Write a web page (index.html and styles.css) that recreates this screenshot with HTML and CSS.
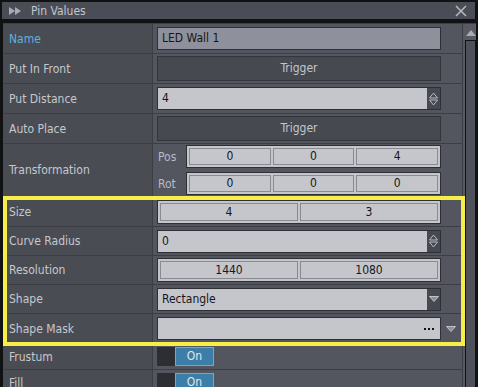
FILE: index.html
```html
<!DOCTYPE html>
<html>
<head>
    <title>Pin Values</title>
    <link rel="stylesheet" href="styles.css">
</head>
<body>
    <div class="panel">
        <div class="titlebar">
            <svg class="ff" width="13" height="8" viewBox="0 0 13 8"><path d="M0 0 L6 4 L0 8 Z M6 0 L12 4 L6 8 Z" fill="#a9abb3"/></svg>
            <span class="title">Pin Values</span>
            <svg class="close" width="12" height="12" viewBox="0 0 12 12"><path d="M1 1 L11 11 M11 1 L1 11" stroke="#b8bac0" stroke-width="1.5"/></svg>
        </div>

        <div class="content">
            <div class="props">
                <div class="row">
                    <div class="label name">Name</div>
                    <div class="value"><div class="field dim">LED Wall 1</div></div>
                </div>
                <div class="row">
                    <div class="label">Put In Front</div>
                    <div class="value"><div class="button">Trigger</div></div>
                </div>
                <div class="row">
                    <div class="label">Put Distance</div>
                    <div class="value">
                        <div class="field with-side">4
                            <span class="side spin"><svg width="9" height="14" viewBox="0 0 9 14"><path d="M0.5 6 L4.5 1 L8.5 6 Z M0.5 8 L4.5 13 L8.5 8 Z" fill="none" stroke="#b9bbc2"/></svg></span>
                        </div>
                    </div>
                </div>
                <div class="row">
                    <div class="label">Auto Place</div>
                    <div class="value"><div class="button">Trigger</div></div>
                </div>
                <div class="row tall">
                    <div class="label">Transformation</div>
                    <div class="value vec-rows">
                        <div class="vec-line">
                            <span class="axis">Pos</span>
                            <div class="cells">
                                <span class="cell">0</span><span class="cell">0</span><span class="cell">4</span>
                            </div>
                        </div>
                        <div class="vec-line">
                            <span class="axis">Rot</span>
                            <div class="cells">
                                <span class="cell">0</span><span class="cell">0</span><span class="cell">0</span>
                            </div>
                        </div>
                    </div>
                </div>
                <div class="row">
                    <div class="label">Size</div>
                    <div class="value">
                        <div class="cells two"><span class="cell">4</span><span class="cell">3</span></div>
                    </div>
                </div>
                <div class="row snug">
                    <div class="label">Curve Radius</div>
                    <div class="value">
                        <div class="field with-side">0
                            <span class="side spin"><svg width="9" height="14" viewBox="0 0 9 14"><path d="M0.5 6 L4.5 1 L8.5 6 Z M0.5 8 L4.5 13 L8.5 8 Z" fill="none" stroke="#b9bbc2"/></svg></span>
                        </div>
                    </div>
                </div>
                <div class="row snug">
                    <div class="label">Resolution</div>
                    <div class="value">
                        <div class="cells two"><span class="cell">1440</span><span class="cell">1080</span></div>
                    </div>
                </div>
                <div class="row snug">
                    <div class="label">Shape</div>
                    <div class="value">
                        <div class="field with-side">Rectangle
                            <span class="side spin"><svg width="10" height="6" viewBox="0 0 10 6"><path d="M0.5 0.5 L9.5 0.5 L5 5.5 Z" fill="#8d9098" stroke="#c0c2c8"/></svg></span>
                        </div>
                    </div>
                </div>
                <div class="row">
                    <div class="label">Shape Mask</div>
                    <div class="value mask">
                        <div class="field">
                            <svg class="dots" width="10" height="2" viewBox="0 0 10 2"><rect x="0" y="0" width="2" height="2" fill="#111"/><rect x="4" y="0" width="2" height="2" fill="#111"/><rect x="8" y="0" width="2" height="2" fill="#111"/></svg>
                        </div>
                        <svg class="outer-arrow" width="10" height="6" viewBox="0 0 10 6"><path d="M0.5 0.5 L9.5 0.5 L5 5.5 Z" fill="#8d9098" stroke="#c0c2c8"/></svg>
                    </div>
                </div>
                <div class="row short">
                    <div class="label">Frustum</div>
                    <div class="value"><div class="toggle"><span class="knob"></span><span class="on">On</span></div></div>
                </div>
                <div class="row short">
                    <div class="label">Fill</div>
                    <div class="value"><div class="toggle"><span class="knob"></span><span class="on">On</span></div></div>
                </div>
            </div>

            <div class="scrollbar">
                <svg class="up" width="10" height="6" viewBox="0 0 10 6"><path d="M0 6 L5 0 L10 6 Z" fill="#a9abb3"/></svg>
                <div class="thumb"></div>
            </div>
        </div>

        <div class="highlight"></div>
    </div>
</body>
</html>
```

FILE: styles.css
```css
html, body {
    margin: 0;
    padding: 0;
    background: #1c1d20;
}
body {
    font-family: "DejaVu Sans Condensed", "DejaVu Sans", sans-serif;
    font-size: 11px;
    color: #c6c8cc;
}
.panel {
    position: relative;
    width: 478px;
    height: 387px;
    overflow: hidden;
    background: #111214;
}
.titlebar {
    display: flex;
    align-items: center;
    height: 17px;
    margin: 2px 3px 0 2px;
    padding-left: 7px;
    background: #4a4c56;
    border-bottom: 3px solid #111214;
}
.titlebar .ff {
    margin-right: 9px;
}
.titlebar .title {
    flex: 1;
    font-size: 12px;
    color: #c4c6ce;
}
.titlebar .close {
    margin-right: 8px;
}
.content {
    display: flex;
    margin: 1px 2px 0 3px;
    border-top: 1px solid #3d3f46;
}
.props {
    width: 459px;
}
.row {
    display: flex;
    height: 29px;
    border-bottom: 1px solid #3c3e44;
}
.row.snug {
    height: 28px;
}
.row.tall {
    height: 52px;
}
.row.short {
    height: 25px;
}
.label {
    width: 143px;
    padding-left: 6px;
    display: flex;
    align-items: center;
    background: #4a4c54;
    border-right: 1px solid #3c3e44;
    font-size: 12px;
    color: #c6c8cc;
}
.label.name {
    color: #5fb1df;
}
.value {
    flex: 1;
    display: flex;
    align-items: center;
    padding: 0 21px 0 4px;
    background: #54565f;
}
.field {
    position: relative;
    flex: 1;
    height: 21px;
    line-height: 21px;
    padding-left: 4px;
    background: #c5c6cb;
    border: 1px solid #2e3035;
    color: #15161a;
    font-size: 12px;
}
.field.dim {
    background: #8e919c;
}
.field.with-side {
    padding-right: 14px;
}
.side {
    position: absolute;
    top: 0;
    right: 0;
    width: 13px;
    height: 21px;
    display: flex;
    align-items: center;
    justify-content: center;
    background: #464951;
}
.button {
    flex: 1;
    height: 23px;
    line-height: 23px;
    text-align: center;
    background: #464950;
    border: 1px solid #33353b;
    color: #c4c6ca;
    font-size: 12px;
}
.vec-rows {
    flex-direction: column;
    align-items: stretch;
    justify-content: center;
    gap: 4px;
}
.vec-line {
    display: flex;
    align-items: center;
}
.axis {
    width: 28px;
    padding-left: 1px;
    font-size: 12px;
    color: #b4bccb;
}
.cells {
    flex: 1;
    display: flex;
    gap: 2px;
    padding: 2px;
    background: #c5c6cb;
    border: 1px solid #2e3035;
}
.cell {
    flex: 1;
    height: 15px;
    line-height: 15px;
    text-align: center;
    border: 1px solid #8a8b90;
    color: #15161a;
    font-size: 12px;
}
.cells.two .cell {
    height: 16px;
    line-height: 16px;
}
.value.mask {
    position: relative;
}
.dots {
    position: absolute;
    right: 6px;
    top: 10px;
}
.outer-arrow {
    position: absolute;
    right: 6px;
    top: 12px;
}
.toggle {
    display: flex;
    height: 19px;
}
.knob {
    width: 18px;
    background: #2d2e33;
}
.on {
    width: 37px;
    text-align: center;
    line-height: 17px;
    background: #3d7ea9;
    border: 1px solid #6daad2;
    color: #e2e6ea;
    font-size: 12px;
}
.scrollbar {
    flex: 1;
    position: relative;
    background: #575963;
    border-left: 1px solid #3c3e44;
}
.scrollbar .up {
    position: absolute;
    left: 3px;
    top: 6px;
}
.thumb {
    position: absolute;
    left: 2px;
    top: 16px;
    width: 9px;
    height: 360px;
    background: #4e5159;
    border: 1px solid #111214;
}
.highlight {
    position: absolute;
    left: 3px;
    top: 196px;
    width: 454px;
    height: 142px;
    border: 4px solid #f7ee4a;
    pointer-events: none;
}
```
